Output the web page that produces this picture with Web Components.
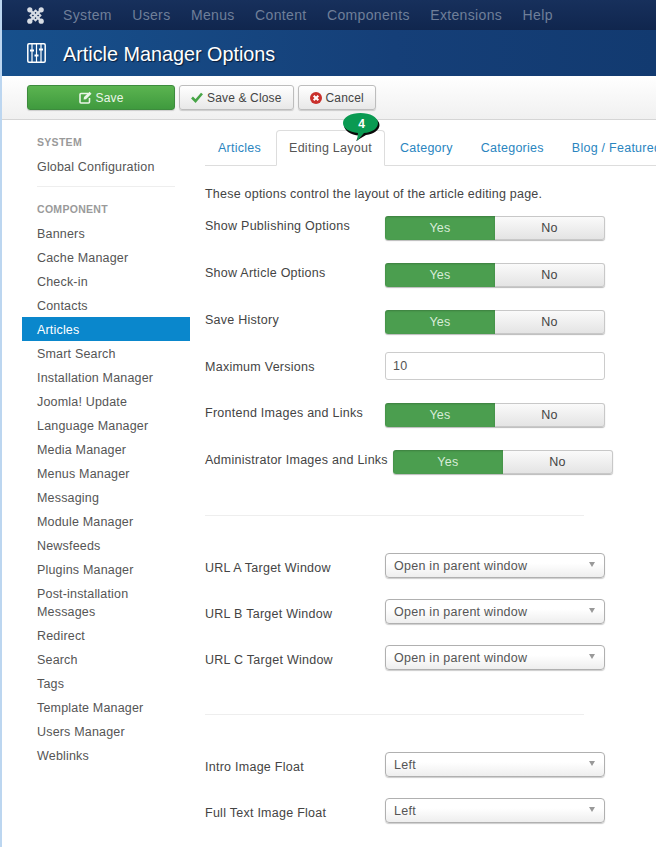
<!DOCTYPE html>
<html><head><meta charset="utf-8">
<style>
html,body{margin:0;height:847px;overflow:hidden;background:#fff}
body{font:13px/18px "Liberation Sans",Arial,sans-serif;color:#444;letter-spacing:.26px;border-left:2px solid #bcd6f0;box-sizing:border-box;width:656px}
.main{display:flex;align-items:flex-start}
</style></head><body>
<template id="t-top"><style>
:host{display:flex;align-items:center;height:30px;background:linear-gradient(#17305c,#10264e);color:#6f7f99;font-size:14px;letter-spacing:.35px}
svg{margin:0 19px 0 25px;flex:none}
span{margin-right:20.400px;white-space:nowrap}
</style><svg width="17" height="17" viewBox="0 0 17 17" fill="none" stroke="#d7dce4"><path d="M3 3 14 14M14 3 3 14" stroke-width="2.400"/><path d="M8.500 3.500 13.500 8.500 8.500 13.500 3.500 8.500Z" stroke-width="1.800"/><g fill="#d7dce4" stroke="none"><circle cx="2.800" cy="2.800" r="2.600"/><circle cx="14.200" cy="2.800" r="2.600"/><circle cx="2.800" cy="14.200" r="2.600"/><circle cx="14.200" cy="14.200" r="2.600"/></g></svg><span>System</span><span>Users</span><span>Menus</span><span>Content</span><span>Components</span><span>Extensions</span><span>Help</span></template>
<template id="t-title"><style>
:host{display:flex;align-items:center;height:46px;box-sizing:border-box;padding-top:1px;background:linear-gradient(90deg,#17508c,#153f78 60%,#123a70);color:#fff;font-size:19.800px;letter-spacing:0;text-shadow:1px 1px 1px #0a1c38}
svg{margin:-1px 17px 0 25px;flex:none}
</style><svg width="19" height="20" viewBox="0 0 19 20" fill="none" stroke="#fff"><rect x=".8" y=".8" width="17.400" height="18.400" rx="1.200" stroke-width="1.500"/><path d="M5 1v18M9.500 1v18M14 1v18" stroke-width="1.200"/><path d="M3 7.500h4M7.500 12.500h4M12 6.500h4" stroke-width="2.200"/></svg><slot></slot></template>
<template id="t-toolbar"><style>
:host{display:flex;align-items:flex-start;gap:4px;height:44px;box-sizing:border-box;padding:9px 0 0 25px;background:linear-gradient(#fff,#f0f0f0);border-bottom:1px solid #d5d5d5}
</style><slot></slot></template>
<template id="t-btn"><style>
:host{display:inline-flex;align-items:center;justify-content:center;gap:4px;height:25px;box-sizing:border-box;padding:0 11px;border:1px solid #bdbdbd;border-radius:3px;background:linear-gradient(#fff,#e8e8e8);box-shadow:0 1px 1px #ccc;font-size:12px;letter-spacing:.15px;color:#444}
:host([primary]){width:148px;background:linear-gradient(#5bb450,#3f9a3e);border-color:#3d8b3d;color:#eaf5e8}
</style><slot name="icon"></slot><slot></slot></template>
<template id="t-side"><style>
:host{display:block;width:168px;margin-left:20px;padding-top:12px;flex:none;letter-spacing:.18px}
</style><slot></slot></template>
<template id="t-sh"><style>
:host{display:block;padding:0 0 2px 15px;line-height:20px;font-size:10.500px;font-weight:700;color:#9a9a9a;letter-spacing:.3px;text-transform:uppercase}
</style><slot></slot></template>
<template id="t-si"><style>
:host{display:block;padding:4px 15px 2px;line-height:18px;color:#555;font-size:12.500px}
:host([active]){background:#0a87cc;color:#fff}
</style><slot></slot></template>
<template id="t-tabs"><style>
:host{display:flex;height:36px;box-sizing:border-box;border-bottom:1px solid #ddd;margin-top:10px;position:relative;white-space:nowrap;font-size:12.500px;letter-spacing:.26px}
</style><slot></slot></template>
<template id="t-tab"><style>
:host{display:block;box-sizing:border-box;height:36px;padding:9px 13px 0;margin-right:2px;color:#2a85c0;flex:none}
:host([active]){color:#555;background:#fff;border:1px solid #ddd;border-bottom-color:#fff;border-radius:4px 4px 0 0;padding:8px 12px 0}
</style><slot></slot></template>
<template id="t-bubble"><style>
:host{position:absolute;left:138px;top:-17px;width:37px;height:28px;display:block}
svg{position:absolute;left:0;top:0}
span{position:absolute;left:0;top:0;width:37px;text-align:center;font:700 12px/22px "Liberation Sans",Arial,sans-serif;color:#fff;letter-spacing:0}
</style><svg width="37" height="29" viewBox="0 0 37 29"><path d="M1 12C1 18 8 22 16 22.500L13 28 23 22C31 21 36.500 17 36.500 12 36.500 6 28 2 19 2S1 6 1 12Z" fill="#0a0a0a"/><path d="M0 10C0 4 8 0 17.500 0S35 4 35 10C35 15.500 29 19.500 21 20L14 28 15 20C6 19 0 15.500 0 10Z" fill="#0a9a52"/></svg><span><slot></slot></span></template>
<template id="t-row"><style>
:host{display:flex;align-items:flex-start;margin-bottom:var(--mb,23px)}
label{flex:none;min-width:175px;margin-right:5px;padding-top:var(--lp,1px);font-size:12.500px;color:#444;white-space:nowrap}
</style><label><slot name="label"></slot></label><slot></slot></template>
<template id="t-switch"><style>
:host{display:flex;width:220px;height:24px;box-sizing:border-box;border-radius:3px;font-size:12.500px;line-height:25px;text-align:center;box-shadow:0 1px 1px #bbb}
.y{flex:0 0 110px;background:#4b9e4f;color:#d8ecd8;border-radius:3px 0 0 3px;box-shadow:inset 0 1px 2px rgba(0,0,0,.2)}
.n{flex:1;border:1px solid #c8c8c8;border-left:0;border-radius:0 3px 3px 0;background:linear-gradient(#fafafa,#e4e4e4);color:#444;line-height:23px}
</style><div class="y">Yes</div><div class="n">No</div></template>
<template id="t-input"><style>
:host{display:block;width:220px;height:28px;box-sizing:border-box;border:1px solid #ccc;border-radius:3px;padding:0 7px;line-height:27px;font-size:12.500px;color:#555;background:#fff}
</style><slot></slot></template>
<template id="t-select"><style>
:host{display:flex;align-items:center;justify-content:space-between;width:220px;height:25px;box-sizing:border-box;border:1px solid #b0b0b0;border-radius:4px;padding:0 9px 0 8px;font-size:12.500px;color:#555;background:linear-gradient(#fff 40%,#eee);box-shadow:0 1px 1px #ccc}
i{width:0;height:0;border:3.500px solid transparent;border-top:5px solid #999;border-bottom:0;margin-top:-2px}
</style><slot></slot><i></i></template>
<template id="t-form"><style>
:host{display:block;width:451px;margin-left:15px;flex:none;overflow:visible}
</style><slot></slot></template>
<template id="t-hr"><style>
:host{display:block;width:379px;height:1px;background:#eee;margin:var(--m)}
</style></template>

<j-top></j-top>
<j-title>Article Manager Options</j-title>
<j-toolbar>
 <j-btn primary><svg slot="icon" width="13" height="13" viewBox="0 0 13 13" fill="none" stroke="#eaf5e8"><path d="M9 2.500H2A1 1 0 0 0 1 3.500V11a1 1 0 0 0 1 1h7.500a1 1 0 0 0 1-1V7" stroke-width="1.600"/><path d="M5 6 10.500 .8 12.500 2.800 7 8.300 4.600 8.500Z" fill="#eaf5e8" stroke="none"/></svg>Save</j-btn>
 <j-btn><svg slot="icon" width="12" height="11" viewBox="0 0 12 11" fill="none" stroke="#47a447" stroke-width="2.600"><path d="M1 5.500 4.500 9 11 1.500"/></svg>Save &amp; Close</j-btn>
 <j-btn><svg slot="icon" width="12" height="12" viewBox="0 0 13 13"><circle cx="6.500" cy="6.500" r="6.500" fill="#c9302c"/><path d="M4 4 9 9M9 4 4 9" stroke="#fff" stroke-width="2.200"/></svg>Cancel</j-btn>
</j-toolbar>
<div class="main">
 <j-side>
  <j-sh>System</j-sh>
  <j-si>Global Configuration</j-si>
  <j-hr style="--m:8px 0 12px 15px;width:138px"></j-hr>
  <j-sh>Component</j-sh>
  <j-si>Banners</j-si><j-si>Cache Manager</j-si><j-si>Check-in</j-si><j-si>Contacts</j-si><j-si active>Articles</j-si><j-si>Smart Search</j-si><j-si>Installation Manager</j-si><j-si>Joomla! Update</j-si><j-si>Language Manager</j-si><j-si>Media Manager</j-si><j-si>Menus Manager</j-si><j-si>Messaging</j-si><j-si>Module Manager</j-si><j-si>Newsfeeds</j-si><j-si>Plugins Manager</j-si><j-si>Post-installation Messages</j-si><j-si>Redirect</j-si><j-si>Search</j-si><j-si>Tags</j-si><j-si>Template Manager</j-si><j-si>Users Manager</j-si><j-si>Weblinks</j-si>
 </j-side>
 <j-form>
  <j-tabs>
   <j-tab>Articles</j-tab><j-tab active>Editing Layout</j-tab><j-tab>Category</j-tab><j-tab>Categories</j-tab><j-tab>Blog / Featured</j-tab>
   <j-bubble>4</j-bubble>
  </j-tabs>
  <div style="margin:19px 0 13px;font-size:12.500px;color:#444;letter-spacing:.22px">These options control the layout of the article editing page.</div>
  <j-row><span slot="label">Show Publishing Options</span><j-switch></j-switch></j-row>
  <j-row><span slot="label">Show Article Options</span><j-switch></j-switch></j-row>
  <j-row style="--mb:18px"><span slot="label">Save History</span><j-switch></j-switch></j-row>
  <j-row style="--lp:6px"><span slot="label">Maximum Versions</span><j-input>10</j-input></j-row>
  <j-row><span slot="label">Frontend Images and Links</span><j-switch></j-switch></j-row>
  <j-row style="--mb:0"><span slot="label">Administrator Images and Links</span><j-switch></j-switch></j-row>
  <j-hr style="--m:41px 0 37px"></j-hr>
  <j-row style="--mb:21px;--lp:6px"><span slot="label">URL A Target Window</span><j-select>Open in parent window</j-select></j-row>
  <j-row style="--mb:21px;--lp:6px"><span slot="label">URL B Target Window</span><j-select>Open in parent window</j-select></j-row>
  <j-row style="--mb:0;--lp:6px"><span slot="label">URL C Target Window</span><j-select>Open in parent window</j-select></j-row>
  <j-hr style="--m:44px 0 37px"></j-hr>
  <j-row style="--mb:21px;--lp:6px"><span slot="label">Intro Image Float</span><j-select>Left</j-select></j-row>
  <j-row style="--mb:0;--lp:6px"><span slot="label">Full Text Image Float</span><j-select>Left</j-select></j-row>
 </j-form>
</div>
<script>
const map={'j-top':'t-top','j-title':'t-title','j-toolbar':'t-toolbar','j-btn':'t-btn','j-side':'t-side','j-sh':'t-sh','j-si':'t-si','j-tabs':'t-tabs','j-tab':'t-tab','j-bubble':'t-bubble','j-row':'t-row','j-switch':'t-switch','j-input':'t-input','j-select':'t-select','j-form':'t-form','j-hr':'t-hr'};
for(const [name,id] of Object.entries(map)){
 customElements.define(name,class extends HTMLElement{
  constructor(){super();this.attachShadow({mode:'open'}).appendChild(document.getElementById(id).content.cloneNode(true));}
 });
}
</script>
</body></html>
